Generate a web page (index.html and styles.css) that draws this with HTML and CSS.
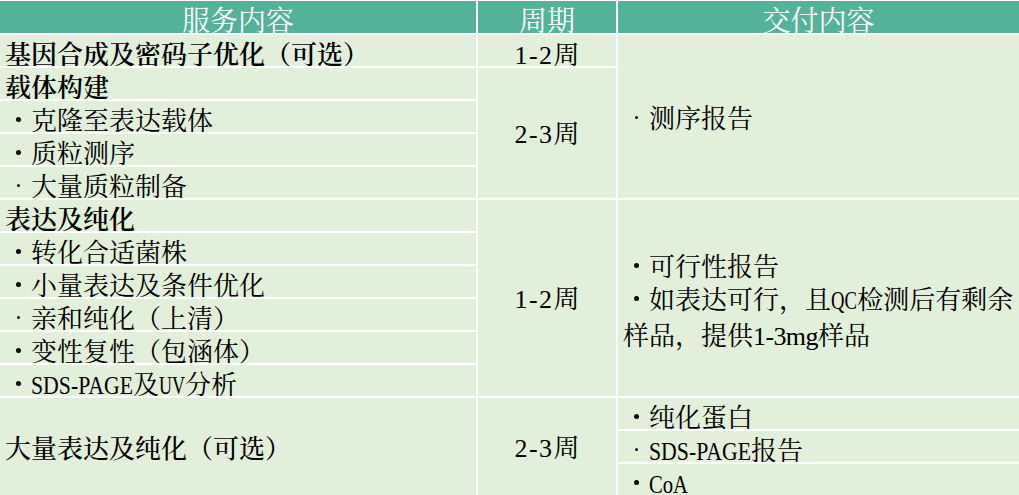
FILE: index.html
```html
<!DOCTYPE html>
<html lang="zh-CN">
<head>
<meta charset="utf-8">
<title>服务内容</title>
<link rel="stylesheet" href="styles.css">
</head>
<body>
<div class="sheet">
  <div class="cell head c1">服务内容</div>
  <div class="cell head c2">周期</div>
  <div class="cell head c3">交付内容</div>

  <div class="cell c1 bold">基因合成及密码子优化（可选）</div>
  <div class="cell c2 ctr"><span class="num">1-2</span>周</div>
  <div class="cell c3 span5 block"><p><span class="dot sm"></span>测序报告</p></div>

  <div class="cell c1 bold">载体构建</div>
  <div class="cell c2 span4 mid"><p><span class="num">2-3</span>周</p></div>
  <div class="cell c1"><span class="dot"></span>克隆至表达载体</div>
  <div class="cell c1"><span class="dot"></span>质粒测序</div>
  <div class="cell c1"><span class="dot sm"></span>大量质粒制备</div>

  <div class="cell c1 bold">表达及纯化</div>
  <div class="cell c2 span6 mid"><p><span class="num">1-2</span>周</p></div>
  <div class="cell c3 span6 block shift">
    <p><span class="dot"></span>可行性报告</p>
    <p><span class="dot"></span>如表达可行，且<span class="lat w-qc">QC</span>检测后有剩余<br>样品，提供<span class="num mg">1-3mg</span>样品</p>
  </div>
  <div class="cell c1"><span class="dot"></span>转化合适菌株</div>
  <div class="cell c1"><span class="dot"></span>小量表达及条件优化</div>
  <div class="cell c1"><span class="dot sm"></span>亲和纯化（上清）</div>
  <div class="cell c1"><span class="dot"></span>变性复性（包涵体）</div>
  <div class="cell c1"><span class="dot"></span><span class="lat w-sds">SDS-PAGE</span>及<span class="lat w-uv">UV</span>分析</div>

  <div class="cell c1 span3 block medium"><p>大量表达及纯化（可选）</p></div>
  <div class="cell c2 span3 mid"><p><span class="num">2-3</span>周</p></div>
  <div class="cell c3"><span class="dot"></span>纯化蛋白</div>
  <div class="cell c3"><span class="dot sm"></span><span class="lat w-sds">SDS-PAGE</span>报告</div>
  <div class="cell c3"><span class="dot"></span><span class="lat w-coa">CoA</span></div>
</div>
</body>
</html>
```

FILE: styles.css
```css
html, body {
  margin: 0;
  padding: 0;
  background: #ffffff;
}

body {
  font-family: "Noto Serif CJK SC", "Noto Sans CJK SC", serif;
  color: #000000;
  overflow: hidden;
  text-spacing-trim: space-all;
}

.sheet {
  width: 1019px;
  display: grid;
  grid-template-columns: 476px 138px 401px;
  grid-template-rows: 32px repeat(14, 31px);
  gap: 2px;
  padding-top: 1px;
  background: #ffffff;
}

.cell {
  background: #e2efda;
  font-size: 26px;
  line-height: 27px;
  padding: 4px 0 0 5px;
  white-space: nowrap;
  overflow: hidden;
}

.head {
  background: #53b298;
  color: #ffffff;
  font-size: 28px;
  line-height: 27px;
  text-align: center;
  padding: 5px 0 0 0;
}

.c1 { grid-column: 1; }
.c2 { grid-column: 2; }
.c3 { grid-column: 3; }

.span3 { grid-row: span 3; }
.span4 { grid-row: span 4; }
.span5 { grid-row: span 5; }
.span6 { grid-row: span 6; }

.bold { font-weight: 600; }
.medium { font-weight: 500; }

.ctr {
  text-align: center;
  padding-left: 0;
}

.mid,
.block {
  display: flex;
  flex-direction: column;
  justify-content: center;
  padding-top: 0;
}

.mid {
  align-items: center;
  padding-left: 0;
}

.block {
  align-items: flex-start;
}

.block.shift {
  padding-top: 5px;
}

.mid p,
.block p {
  margin: 0;
  line-height: 33px;
}

.dot {
  display: inline-block;
  width: 26px;
  text-align: center;
}

.dot::before {
  content: "";
  display: inline-block;
  width: 5px;
  height: 5px;
  border-radius: 50%;
  background: #000000;
  vertical-align: 8px;
}

.dot.sm::before {
  width: 3px;
  height: 3px;
  vertical-align: 9px;
}

/* half-width Latin, like the sheet's Song-style font */
.num {
  font-family: "Liberation Serif", serif;
  font-size: 26px;
  letter-spacing: 1.4px;
}

.num.mg {
  letter-spacing: -0.6px;
}

.lat {
  display: inline-block;
  font-family: "Liberation Serif", serif;
  font-size: 26px;
  transform-origin: left center;
}

.w-sds {
  transform: scaleX(0.837);
  margin-right: -20px;
}

.w-uv {
  transform: scaleX(0.693);
  margin-right: -11.5px;
}

.w-qc {
  transform: scaleX(0.72);
  margin-right: -10px;
}

.w-coa {
  transform: scaleX(0.794);
  margin-right: -10px;
}
```
